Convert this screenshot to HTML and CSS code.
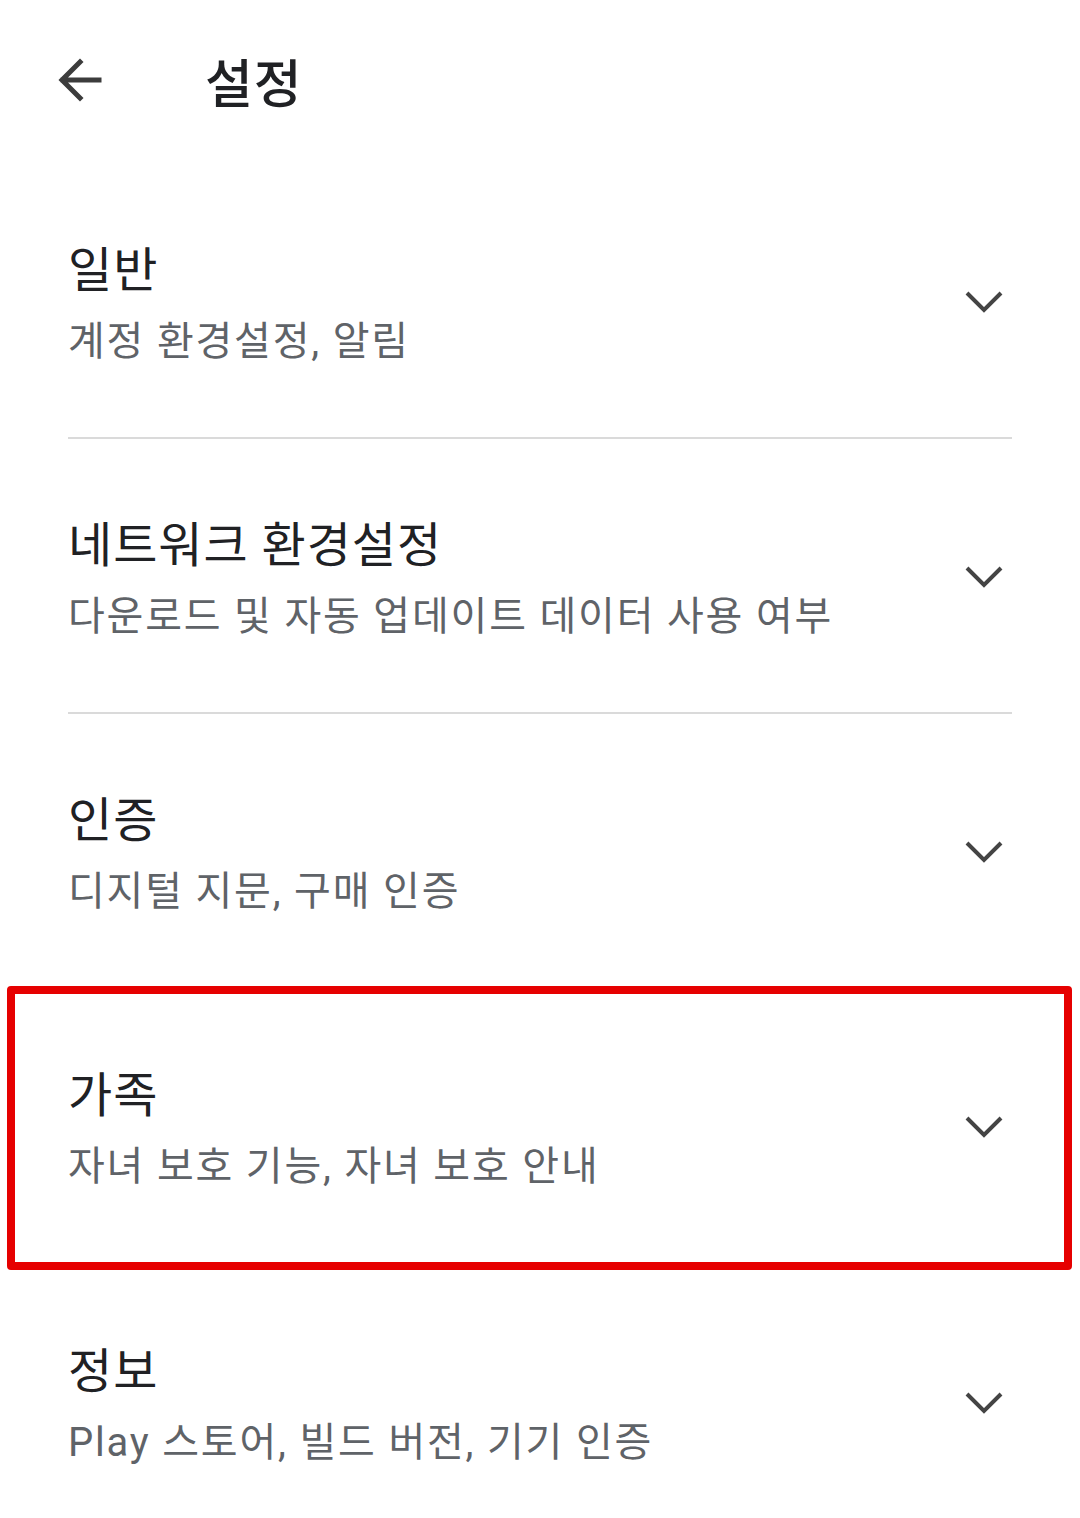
FILE: index.html
```html
<!DOCTYPE html>
<html lang="ko">
  <head>
    <meta charset="UTF-8">
    <meta name="viewport" content="width=device-width, initial-scale=1.0">
    <title>설정</title>
    <link rel="stylesheet" href="styles.css">
  </head>
  <body>
    <header class="top-bar">
      <span class="back-btn">
        <svg width="48" height="48" viewBox="0 0 48 48">
          <path d="M44 24H8M25 6L7 24l18 18" fill="none" stroke="#3c3c3c" stroke-width="5" stroke-linecap="square"/>
        </svg>
      </span>
      <h1 class="page-title">설정</h1>
    </header>

    <section class="setting-list">
      <div class="setting-row">
        <div class="setting-text">
          <div class="setting-title">일반</div>
          <div class="setting-sub">계정 환경설정, 알림</div>
        </div>
        <svg class="chevron" width="40" height="28" viewBox="0 0 40 28"><path d="M3 5l17 17L37 5" fill="none" stroke="#444" stroke-width="4"/></svg>
      </div>

      <div class="setting-row">
        <div class="setting-text">
          <div class="setting-title">네트워크 환경설정</div>
          <div class="setting-sub">다운로드 및 자동 업데이트 데이터 사용 여부</div>
        </div>
        <svg class="chevron" width="40" height="28" viewBox="0 0 40 28"><path d="M3 5l17 17L37 5" fill="none" stroke="#444" stroke-width="4"/></svg>
      </div>

      <div class="setting-row">
        <div class="setting-text">
          <div class="setting-title">인증</div>
          <div class="setting-sub">디지털 지문, 구매 인증</div>
        </div>
        <svg class="chevron" width="40" height="28" viewBox="0 0 40 28"><path d="M3 5l17 17L37 5" fill="none" stroke="#444" stroke-width="4"/></svg>
      </div>

      <div class="setting-row highlighted">
        <div class="setting-text">
          <div class="setting-title">가족</div>
          <div class="setting-sub">자녀 보호 기능, 자녀 보호 안내</div>
        </div>
        <svg class="chevron" width="40" height="28" viewBox="0 0 40 28"><path d="M3 5l17 17L37 5" fill="none" stroke="#444" stroke-width="4"/></svg>
        <span class="mark-box"></span>
      </div>

      <div class="setting-row">
        <div class="setting-text">
          <div class="setting-title">정보</div>
          <div class="setting-sub">Play 스토어, 빌드 버전, 기기 인증</div>
        </div>
        <svg class="chevron" width="40" height="28" viewBox="0 0 40 28"><path d="M3 5l17 17L37 5" fill="none" stroke="#444" stroke-width="4"/></svg>
      </div>
    </section>
  </body>
</html>
```

FILE: styles.css
```css
body {
  margin: 0;
  background: #fff;
  font-family: Roboto, "Noto Sans CJK KR", sans-serif;
  color: #202124;
}

.top-bar {
  display: flex;
  align-items: center;
  height: 164px;
  padding: 0 0 0 55px;
  box-sizing: border-box;
}

.back-btn {
  display: flex;
  width: 48px;
  height: 48px;
  margin-top: -4px;
}

.page-title {
  margin: -4px 0 0 102px;
  font-size: 52px;
  font-weight: 500;
  letter-spacing: 1px;
}

.setting-list {
  padding: 0 68px;
}

.setting-row {
  position: relative;
  display: flex;
  align-items: center;
  justify-content: space-between;
  height: 275px;
  box-sizing: border-box;
  border-bottom: 2px solid #dadada;
  padding-top: 16px;
}

.setting-row:last-child {
  border-bottom: none;
}

.setting-title {
  font-size: 48px;
  line-height: 66px;
  letter-spacing: 1px;
  color: #202124;
}

.setting-sub {
  font-size: 40px;
  line-height: 76px;
  letter-spacing: 1.8px;
  color: #5f6368;
}

.chevron {
  margin-right: 8px;
  margin-top: -14px;
}

.mark-box {
  position: absolute;
  top: -3px;
  bottom: -8px;
  left: -61px;
  right: -60px;
  border: 8px solid #e60000;
  border-radius: 4px;
}
```
